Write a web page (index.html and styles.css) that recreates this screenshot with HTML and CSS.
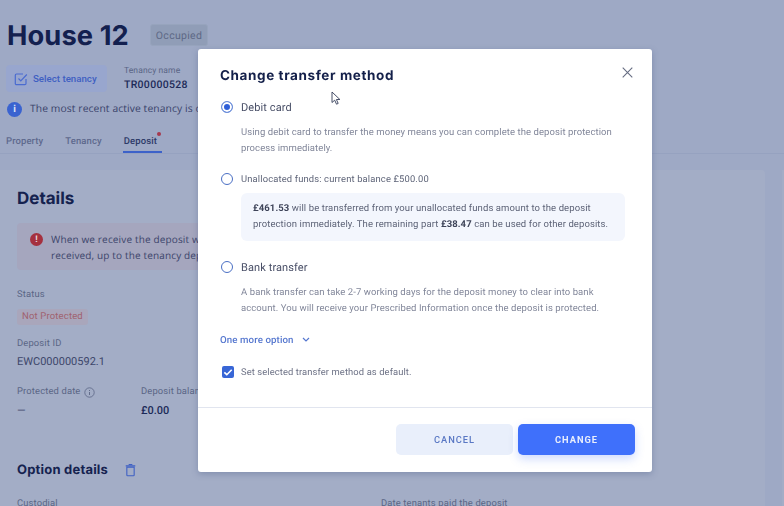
FILE: index.html
```html
<!DOCTYPE html>
<html lang="en">
<head>
<meta charset="utf-8">
<title>House 12</title>
<link rel="stylesheet" href="styles.css">
</head>
<body>
<div class="page">
  <header class="head">
    <div class="title-row">
      <h1 class="title">House 12</h1>
      <span class="status-pill">Occupied</span>
    </div>
    <div class="tenancy-row">
      <button class="select-btn">
        <svg class="select-icon" viewBox="0 0 14 14" width="14" height="14"><path d="M12 7v4.500a1.200 1.200 0 0 1-1.200 1.200H2.500a1.200 1.200 0 0 1-1.200-1.200V3.200A1.200 1.200 0 0 1 2.500 2h6.500" fill="none" stroke="currentColor" stroke-width="1.200"/><path d="M4.500 6.500l2.300 2.300 6-6.300" fill="none" stroke="currentColor" stroke-width="1.200"/></svg>
        Select tenancy
      </button>
      <div class="tenancy-name">
        <span class="tiny-label">Tenancy name</span>
        <strong class="tenancy-value">TR00000528</strong>
      </div>
    </div>
    <div class="info-row">
      <span class="info-dot">i</span>
      <span>The most recent active tenancy is currently selected</span>
    </div>
    <nav class="tabs">
      <a class="tab">Property</a>
      <a class="tab">Tenancy</a>
      <a class="tab tab-active">Deposit<i class="tab-dot"></i></a>
    </nav>
  </header>
  <main class="cards">
    <section class="card">
      <h2 class="section-title">Details</h2>
      <div class="alert">
        <span class="alert-dot">!</span>
        <p class="alert-text">When we receive the deposit we will protect the amount<br>received, up to the tenancy deposit amount</p>
      </div>
      <div class="field-label">Status</div>
      <span class="danger-pill">Not Protected</span>
      <div class="field-label id-label">Deposit ID</div>
      <div class="field-value id-value">EWC000000592.1</div>
      <div class="field-pair">
        <div class="field-col">
          <div class="field-label">Protected date
            <svg class="hint-icon" viewBox="0 0 11 11" width="11" height="11"><circle cx="5.500" cy="5.500" r="4.700" fill="none" stroke="currentColor" stroke-width=".8"/><path d="M5.500 5v3M5.500 3v1" stroke="currentColor" stroke-width=".9"/></svg>
          </div>
          <div class="field-value dash">—</div>
        </div>
        <div class="field-col">
          <div class="field-label">Deposit balance</div>
          <div class="field-value money">£0.00</div>
        </div>
      </div>
      <div class="option-head">
        <h2 class="section-title">Option details</h2>
        <svg class="trash" viewBox="0 0 12 14" width="11" height="14"><path d="M2 4h8v8.500a.8.8 0 0 1-.8.800H2.800a.8.8 0 0 1-.8-.800z M.8 2.500h10.400 M4 1h4" fill="none" stroke="currentColor" stroke-width="1.200"/></svg>
      </div>
      <div class="option-grid">
        <div class="field-label">Custodial</div>
        <div class="field-label">Date tenants paid the deposit</div>
      </div>
    </section>
    <aside class="side-card"></aside>
  </main>
</div>

<div class="overlay">
  <div class="modal">
    <div class="modal-body">
      <div class="modal-head">
        <h2 class="modal-title">Change transfer method</h2>
        <svg class="close" viewBox="0 0 11 11" width="11" height="11"><path d="M.7.7l9.600 9.600M10.300.7L.7 10.300" fill="none" stroke="currentColor" stroke-width="1.100"/></svg>
      </div>
      <div class="option option-first">
        <span class="radio radio-on"></span>
        <span class="option-label">Debit card</span>
      </div>
      <p class="option-desc">Using debit card to transfer the money means you can complete the deposit protection<br>process immediately.</p>
      <div class="option option-second">
        <span class="radio"></span>
        <span class="option-label option-label-small">Unallocated funds: current balance £500.00</span>
      </div>
      <div class="note"><b>£461.53</b> will be transferred from your unallocated funds amount to the deposit<br>protection immediately. The remaining part <b>£38.47</b> can be used for other deposits.</div>
      <div class="option option-third">
        <span class="radio"></span>
        <span class="option-label">Bank transfer</span>
      </div>
      <p class="option-desc">A bank transfer can take 2-7 working days for the deposit money to clear into bank<br>account. You will receive your Prescribed Information once the deposit is protected.</p>
      <div class="more">One more option
        <svg class="more-chevron" viewBox="0 0 8 6" width="8" height="6"><path d="M1 1l3 3 3-3" fill="none" stroke="currentColor" stroke-width="1.200"/></svg>
      </div>
      <div class="default-row">
        <span class="check"><svg viewBox="0 0 12 12" width="12" height="12"><path d="M2.300 6.300l2.500 2.400 4.900-5" fill="none" stroke="#fff" stroke-width="1.600"/></svg></span>
        <span>Set selected transfer method as default.</span>
      </div>
    </div>
    <div class="modal-foot">
      <button class="btn btn-cancel">CANCEL</button>
      <button class="btn btn-change">CHANGE</button>
    </div>
  </div>
  <svg class="cursor" viewBox="0 0 10 15" width="10" height="15"><path d="M1 1v10.500l2.700-2.300 1.800 4 1.700-.8-1.800-3.900h3.500z" fill="#fff" stroke="#333c58" stroke-width=".9"/></svg>
</div>
</body>
</html>
```
FILE: styles.css
```css
* { box-sizing: border-box; }
html, body { margin: 0; height: 100%; overflow: hidden; }
body { background: #9ea9c5; font-family: Roboto, "Liberation Sans", sans-serif; color: #4a5273; text-rendering: geometricPrecision; }
h1, h2, p { margin: 0; }
button { font-family: inherit; border: 0; }

.page { height: 506px; overflow: hidden; }
.head { padding: 19px 0 0 7px; height: 154px; border-bottom: 1px solid #96a2c0; }
.title-row { display: flex; align-items: center; height: 33px; gap: 20px; }
.title { font-family: Inter, sans-serif; font-size: 27.300px; font-weight: 700; color: #13204f; line-height: 33px; width: 123px; letter-spacing: .1px; }
.status-pill { width: 58px; height: 22px; margin-top: -1px; border-radius: 3px; background: #909db7; color: #5d6885; font-size: 10.500px; letter-spacing: .3px; display: flex; align-items: center; justify-content: center; border: 1px solid #97a4bd; }
.tenancy-row { display: flex; margin-top: 13px; height: 27px; gap: 17px; margin-left: -1px; }
.select-btn { width: 101px; height: 27px; border-radius: 4px; background: #98a6ce; color: #3f5fc2; font-size: 9.700px; font-weight: 500; display: flex; align-items: center; gap: 5px; padding: 0 0 0 8px; }
.select-icon { flex: none; color: #4a6bd0; }
.tenancy-name { display: flex; flex-direction: column; margin-top: 1px; }
.tiny-label { font-size: 8.500px; color: #5a6585; line-height: 11px; letter-spacing: .1px; }
.tenancy-value { font-size: 10.500px; line-height: 15px; font-weight: 500; color: #1c2a58; letter-spacing: .3px; }
.info-row { display: flex; align-items: center; gap: 8px; margin-top: 8px; height: 18px; font-family: "Open Sans", sans-serif; font-size: 10.300px; color: #39426a; white-space: nowrap; letter-spacing: .1px; }
.info-dot { width: 15px; height: 15px; border-radius: 50%; background: #3a63d0; color: #dfe6f6; font-size: 10px; font-weight: 700; display: flex; align-items: center; justify-content: center; font-family: Roboto, sans-serif; }
.tabs { display: flex; gap: 22px; margin: 16px 0 0 -1px; height: 19px; font-size: 9.500px; font-weight: 500; color: #5f6a8e; letter-spacing: .1px; }
.tab { display: block; height: 19px; line-height: 16px; position: relative; }
.tab-active { width: 39px; padding-left: 1px; margin-left: -1px; border-bottom: 2px solid #3d62c9; color: #2d3a68; }
.tab-dot { position: absolute; width: 4px; height: 4px; border-radius: 50%; background: #a5384f; top: -2px; right: 1px; }

.cards { display: flex; gap: 17px; padding-top: 16px; }
.card { width: 765px; height: 400px; flex: none; background: #a3adc6; border-radius: 0 4px 0 0; padding: 19px 0 0 17px; }
.side-card { flex: 1; background: #a3adc6; }
.section-title { font-family: Inter, sans-serif; font-size: 17px; font-weight: 700; line-height: 20px; color: #15224f; }
.alert { width: 300px; height: 47px; margin-top: 14px; border-radius: 4px; background: #a5a6be; display: flex; padding: 8px 0 0 13px; gap: 8px; }
.alert-dot { width: 13px; height: 13px; margin-top: 2px; border-radius: 50%; background: #a5303f; color: #e8d9de; font-size: 9px; font-weight: 700; display: flex; align-items: center; justify-content: center; flex: none; }
.alert-text { font-family: "Open Sans", sans-serif; font-size: 10px; line-height: 16px; color: #3c446a; white-space: nowrap; letter-spacing: .15px; }
.field-label { font-size: 9.400px; line-height: 14px; color: #5a6585; letter-spacing: .15px; display: flex; align-items: center; gap: 4px; }
.alert + .field-label { margin-top: 18px; }
.danger-pill { display: block; width: 71px; height: 16px; margin-top: 7px; border-radius: 3px; background: #a9a6bb; color: #a0626f; font-size: 9.500px; line-height: 16px; text-align: center; letter-spacing: .15px; }
.id-label { margin-top: 12px; }
.field-value { font-size: 11px; line-height: 16px; color: #3d466a; }
.id-value { margin-top: 3px; }
.field-pair { display: flex; margin-top: 15px; }
.field-col { width: 124px; }
.hint-icon { color: #5a6585; }
.dash { margin-top: 4px; }
.money { font-weight: 500; color: #1c2a58; margin-top: 4px; }
.option-head { display: flex; align-items: center; gap: 17px; margin-top: 41px; height: 20px; }
.option-head .section-title { font-size: 13px; letter-spacing: .2px; }
.trash { color: #3f60c4; flex: none; }
.option-grid { display: grid; grid-template-columns: 364px 1fr; margin-top: 17px; }

.overlay { position: fixed; inset: 0; }
.modal { position: absolute; left: 198px; top: 49px; width: 454px; height: 423px; background: #fff; border-radius: 3px; display: flex; flex-direction: column; box-shadow: 0 2px 6px rgba(70, 85, 130, .35); }
.modal-body { flex: 1; padding: 18px 21px 0 22px; border-bottom: 1px solid #e1e5ef; }
.modal-head { display: flex; justify-content: space-between; align-items: flex-start; height: 18px; }
.modal-title { font-family: Inter, sans-serif; font-size: 13.500px; line-height: 18px; font-weight: 700; color: #14204a; letter-spacing: .6px; }
.close { color: #666d82; margin: 0 -2px 0 0; }
.option { display: flex; align-items: center; gap: 8px; height: 14px; }
.option-first { margin-top: 15px; }
.option-second { margin-top: 15px; }
.option-third { margin-top: 19px; }
.radio { width: 12px; height: 12px; margin-left: 1px; border-radius: 50%; border: 1.300px solid #4a6fc4; background: #fff; flex: none; }
.radio-on { background: #2f5fd8; box-shadow: inset 0 0 0 2px #fff; border-color: #6d8fd8; }
.option-label { font-size: 11px; color: #4a5068; letter-spacing: .1px; }
.option-label-small { font-size: 9.400px; color: #5e6478; letter-spacing: .15px; }
.option-desc { margin: 11px 0 0 21px; font-size: 9.500px; line-height: 16px; color: #82879a; letter-spacing: .08px; white-space: nowrap; }
.note { margin: 7px 6px 0 21px; height: 48px; padding: 8px 12px; border-radius: 6px; background: #f3f6fd; font-size: 9.500px; line-height: 16px; color: #5e6478; letter-spacing: .1px; white-space: nowrap; }
.note b { font-weight: 700; color: #3e4459; }
.more { display: flex; align-items: center; gap: 8px; margin-top: 16px; height: 14px; color: #5577cf; font-size: 9.700px; font-weight: 500; letter-spacing: .1px; }
.default-row { display: flex; align-items: center; gap: 7px; margin-top: 18px; height: 14px; font-size: 9.400px; color: #6c7185; letter-spacing: .1px; }
.check { width: 12px; height: 12px; margin-left: 2px; border-radius: 2px; background: #3866d6; flex: none; display: block; }
.check svg { display: block; }
.modal-foot { display: flex; justify-content: flex-end; gap: 5px; height: 64px; padding: 16px 17px 0 0; }
.btn { height: 31px; border-radius: 5px; font-size: 9.300px; letter-spacing: 1px; }
.btn-cancel { width: 117px; background: #e9effb; color: #5a78c4; font-weight: 500; }
.btn-change { width: 117px; background: #3f70fb; color: #e8eefc; font-weight: 700; box-shadow: 0 4px 10px rgba(63, 112, 251, .25); }
.cursor { position: absolute; left: 331px; top: 91px; }
```
